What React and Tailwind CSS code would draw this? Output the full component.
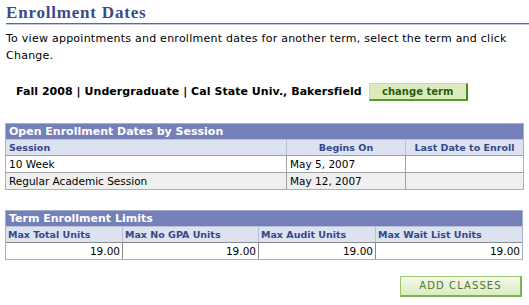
import React from "react";

const f = { fontFamily: "'DejaVu Sans', Verdana, sans-serif" };

export default function App() {
  return (
    <div className="w-[529px] h-[305px] bg-white overflow-hidden relative text-[11px] text-black" style={f}>
      <div className="pl-[6px] pt-[3px]">
        <div className="text-[17px] font-bold text-[#3b4b8a] tracking-[0.8px] leading-[19px]" style={{ fontFamily: "'Liberation Serif', serif" }}>
          Enrollment Dates
        </div>
        <div className="h-[2px] bg-[#5a67a8] mt-[1px] border-b border-[#c8cde6]" />
        <div className="mt-[5px] leading-[17px] text-[11px] tracking-[0.25px] whitespace-nowrap">
          To view appointments and enrollment dates for another term, select the term and click
          <br />
          Change.
        </div>
      </div>
      <div className="flex items-center mt-[19px] pl-[16px] h-[18px]">
        <span className="font-bold text-[11px] tracking-[0.05px]">Fall 2008 | Undergraduate | Cal State Univ., Bakersfield</span>
        <button className="ml-[7px] w-[99px] h-[18px] bg-[#dcebbe] border-l border-t border-[#c4dea0] border-r-2 border-b-2 border-r-[#4a8a24] border-b-[#5a9a30] text-[#2c5e10] font-bold text-[10px] leading-[14px]">
          change term
        </button>
      </div>

      <div className="mx-[5px] mt-[22px] w-[519px] border border-[#a6aecb]">
        <div className="h-[15px] bg-[#7481b8] text-white font-bold text-[11px] leading-[15px] pl-[3px]">
          Open Enrollment Dates by Session
        </div>
        <div className="grid grid-cols-[280px_119px_1fr] text-[10px]">
          <div className="h-[16px] bg-[#dde2f0] text-[#34488a] font-bold text-[9.5px] leading-[16px] pl-[3px] border-t border-[#b9c0d9]">Session</div>
          <div className="h-[16px] bg-[#dde2f0] text-[#34488a] font-bold text-[9.5px] leading-[16px] text-center border-l border-t border-[#b9c0d9]">Begins On</div>
          <div className="h-[16px] bg-[#dde2f0] text-[#34488a] font-bold text-[9.5px] leading-[16px] text-center border-l border-t border-[#b9c0d9]">Last Date to Enroll</div>
          <div className="h-[17px] bg-white leading-[16px] pl-[3px] text-[10.5px] border-t border-[#a0a0a0]">10 Week</div>
          <div className="h-[17px] bg-white leading-[16px] pl-[3px] text-[10.5px] border-l border-t border-[#a0a0a0]">May 5, 2007</div>
          <div className="h-[17px] bg-white border-l border-t border-[#a0a0a0]" />
          <div className="h-[17px] bg-[#efefef] leading-[16px] pl-[3px] text-[10.5px] border-t border-[#a0a0a0]">Regular Academic Session</div>
          <div className="h-[17px] bg-[#efefef] leading-[16px] pl-[3px] text-[10.5px] border-l border-t border-[#a0a0a0]">May 12, 2007</div>
          <div className="h-[17px] bg-[#efefef] border-l border-t border-[#a0a0a0]" />
        </div>
      </div>

      <div className="mx-[5px] mt-[20px] w-[518px] border border-[#a6aecb]">
        <div className="h-[15px] bg-[#7481b8] text-white font-bold text-[11px] leading-[15px] pl-[3px]">
          Term Enrollment Limits
        </div>
        <div className="grid grid-cols-[116px_136px_117px_1fr]">
          {["Max Total Units", "Max No GPA Units", "Max Audit Units", "Max Wait List Units"].map((h, i) => (
            <div key={h} className={"h-[16px] bg-[#dde2f0] text-[#34488a] font-bold text-[9.5px] leading-[16px] pl-[2px] border-t border-[#b9c0d9] " + (i > 0 ? "border-l" : "")}>{h}</div>
          ))}
          {[0, 1, 2, 3].map((i) => (
            <div key={i} className={"h-[17px] bg-white leading-[16px] pr-[2px] text-right text-[10.5px] border-t border-[#8a8a8a] " + (i > 0 ? "border-l" : "")}>19.00</div>
          ))}
        </div>
      </div>

      <div className="flex justify-end pr-[7px] mt-[16px]">
        <button className="w-[122px] h-[21px] bg-gradient-to-b from-[#f4f9ea] to-[#dcebc4] border border-[#9cc872] border-r-2 border-b-2 border-r-[#7fb24e] border-b-[#7fb24e] text-[#4a7a2a] text-[10px] tracking-[1.1px] leading-[18px]">
          ADD CLASSES
        </button>
      </div>
    </div>
  );
}
